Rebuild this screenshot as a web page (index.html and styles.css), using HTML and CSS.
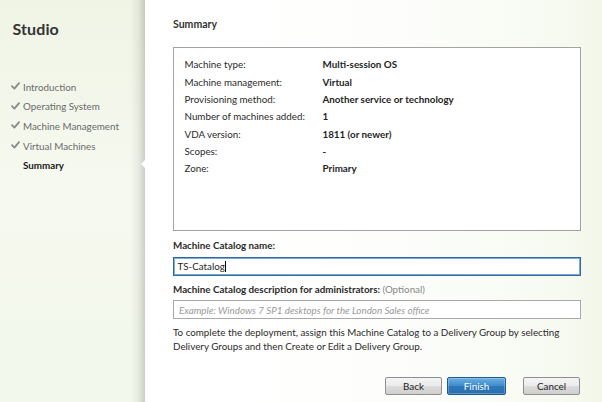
FILE: index.html
```html
<!DOCTYPE html>
<html lang="en">
<head>
<meta charset="utf-8">
<title>Studio - Summary</title>
<link rel="stylesheet" href="styles.css">
</head>
<body>
<div class="window">
  <aside class="sidebar">
    <h1 class="brand">Studio</h1>
    <ul class="steps">
      <li class="step done"><span class="step-icon"><svg viewBox="0 0 9 8" width="9" height="8"><path d="M1 4.2 L3.4 6.6 L8 1.2" fill="none" stroke="#8c8c8c" stroke-width="1.9" stroke-linecap="round" stroke-linejoin="round"/></svg></span>Introduction</li>
      <li class="step done"><span class="step-icon"><svg viewBox="0 0 9 8" width="9" height="8"><path d="M1 4.2 L3.4 6.6 L8 1.2" fill="none" stroke="#8c8c8c" stroke-width="1.9" stroke-linecap="round" stroke-linejoin="round"/></svg></span>Operating System</li>
      <li class="step done"><span class="step-icon"><svg viewBox="0 0 9 8" width="9" height="8"><path d="M1 4.2 L3.4 6.6 L8 1.2" fill="none" stroke="#8c8c8c" stroke-width="1.9" stroke-linecap="round" stroke-linejoin="round"/></svg></span>Machine Management</li>
      <li class="step done"><span class="step-icon"><svg viewBox="0 0 9 8" width="9" height="8"><path d="M1 4.2 L3.4 6.6 L8 1.2" fill="none" stroke="#8c8c8c" stroke-width="1.9" stroke-linecap="round" stroke-linejoin="round"/></svg></span>Virtual Machines</li>
      <li class="step current"><span class="step-icon"></span>Summary</li>
    </ul>
  </aside>
  <main class="panel">
    <h2 class="title">Summary</h2>
    <div class="summary-box">
      <dl class="summary-grid">
        <dt>Machine type:</dt><dd>Multi-session OS</dd>
        <dt>Machine management:</dt><dd>Virtual</dd>
        <dt>Provisioning method:</dt><dd>Another service or technology</dd>
        <dt>Number of machines added:</dt><dd>1</dd>
        <dt>VDA version:</dt><dd>1811 (or newer)</dd>
        <dt>Scopes:</dt><dd>-</dd>
        <dt>Zone:</dt><dd>Primary</dd>
      </dl>
    </div>
    <div class="field-label">Machine Catalog name:</div>
    <div class="text-input focused">TS-Catalog<span class="caret"></span></div>
    <div class="field-label second">Machine Catalog description for administrators: <span class="optional">(Optional)</span></div>
    <div class="text-input placeholder">Example: Windows 7 SP1 desktops for the London Sales office</div>
    <p class="note">To complete the deployment, assign this Machine Catalog to a Delivery Group by selecting<br>Delivery Groups and then Create or Edit a Delivery Group.</p>
    <div class="actions">
      <button class="btn btn-back">Back</button>
      <button class="btn btn-primary">Finish</button>
      <button class="btn btn-cancel">Cancel</button>
    </div>
  </main>
</div>
</body>
</html>
```

FILE: styles.css
```css
* { box-sizing: border-box; }

html, body {
  margin: 0;
  padding: 0;
}

body {
  font-family: Lato, "Open Sans", sans-serif;
  font-size: 9.8px;
  color: #2b2b2b;
  background: #f4f8ee;
}

.window {
  width: 602px;
  height: 402px;
  display: flex;
  overflow: hidden;
  background: linear-gradient(135deg, #f1f5e9 0%, #f7faf2 50%, #f2f7ea 100%);
}

/* ---------- sidebar ---------- */
.sidebar {
  width: 145px;
  flex: none;
  padding: 18px 0 0 11px;
  background:
    linear-gradient(to right, rgba(0,0,0,0) 0, rgba(0,0,0,0) 130px, rgba(0,0,0,0.05) 138px, rgba(0,0,0,0.17) 145px),
    linear-gradient(180deg, #eff4e5 0%, #f5f9ef 45%, #f3f8ec 100%);
}

.brand {
  margin: 0 0 0 1.5px;
  font-size: 16px;
  line-height: 22px;
  font-weight: 700;
  color: #333;
  letter-spacing: 0.1px;
}

.steps {
  list-style: none;
  margin: 37px 0 0;
  padding: 0;
}

.step {
  display: flex;
  align-items: center;
  height: 19.6px;
  color: #6a6a6a;
  white-space: nowrap;
}

.step-icon {
  width: 12px;
  flex: none;
  display: flex;
  align-items: center;
}

.step-icon svg { display: block; margin-top: -1px; }

.step.current {
  color: #1a1a1a;
  font-weight: 700;
}

/* ---------- main panel ---------- */
.panel {
  flex: 1;
  position: relative;
  padding: 18px 21px 0 28px;
  background: linear-gradient(to right, #ffffff 0%, #fdfefc 55%, #f7faf1 90%, #f2f7ea 100%);
}

.panel::before {
  content: "";
  position: absolute;
  left: -4px;
  top: 160px;
  border-style: solid;
  border-width: 4.5px 4px 4.5px 0;
  border-color: transparent #ffffff transparent transparent;
}

.title {
  margin: 0;
  font-size: 10.5px;
  line-height: 13px;
  font-weight: 700;
  color: #333;
}

.summary-box {
  margin-top: 16px;
  height: 184px;
  border: 1px solid #a3a3a3;
  background: #ffffff;
  padding: 7.6px 0 0 10.5px;
}

.summary-grid {
  margin: 0;
  display: grid;
  grid-template-columns: 138px 1fr;
  grid-auto-rows: 17.35px;
  align-items: center;
}

.summary-grid dt {
  color: #2b2b2b;
  white-space: nowrap;
}

.summary-grid dd {
  margin: 0;
  font-weight: 700;
  color: #1f1f1f;
  white-space: nowrap;
}

.field-label {
  margin-top: 7.5px;
  font-weight: 700;
  line-height: 13px;
  color: #2b2b2b;
}

.field-label.second { margin-top: 7.3px; }

.optional {
  font-weight: 400;
  color: #888;
}

.text-input {
  height: 19px;
  margin-top: 5px;
  border: 1px solid #a9a9a9;
  background: #fff;
  display: flex;
  align-items: center;
  padding-left: 4.5px;
  color: #1f1f1f;
}

.text-input.focused {
  border-color: #2a6aa9;
  box-shadow: inset 0 0 0 1px #7ea9d4;
  padding-left: 3.5px;
}

.caret {
  display: inline-block;
  width: 1px;
  height: 11px;
  background: #000;
}

.text-input.placeholder {
  margin-top: 4.3px;
  font-style: italic;
  color: #9a9a9a;
  padding-left: 5px;
}

.note {
  margin: 7px 0 0;
  line-height: 13.4px;
  color: #2b2b2b;
}

.actions {
  margin-top: 24px;
  display: flex;
  justify-content: flex-end;
  padding-right: 1px;
}

.btn {
  height: 18px;
  width: 57px;
  padding: 0;
  font-family: inherit;
  font-size: 9.8px;
  color: #222;
  border: 1px solid #8f8f8f;
  border-radius: 2px;
  background: linear-gradient(180deg, #f4f4f4 0%, #ebebeb 50%, #dddddd 51%, #cfcfcf 100%);
}

.btn-back { margin-right: 5px; }

.btn-primary {
  width: 59px;
  margin-right: 17px;
  color: #ffffff;
  border-color: #1e5b93;
  background: linear-gradient(180deg, #6aaee0 0%, #3e8ccc 50%, #2d78ba 51%, #2a6fad 100%);
  box-shadow: inset 0 0 0 1px rgba(255,255,255,0.25);
}
```
